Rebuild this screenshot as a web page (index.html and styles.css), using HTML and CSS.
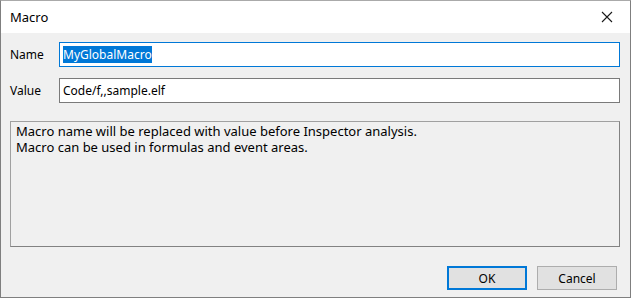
FILE: index.html
```html
<!DOCTYPE html>
<html>
<head>
<meta charset="utf-8">
<link rel="stylesheet" href="styles.css">
</head>
<body>
<div class="window">
  <div class="titlebar">
    <span class="title">Macro</span>
    <span class="close">
      <svg width="12" height="12" viewBox="0 0 12 12"><path d="M1 1 L11 11 M11 1 L1 11" stroke="#1a1a1a" stroke-width="1.1" fill="none"/></svg>
    </span>
  </div>
  <div class="content">
    <div class="fields">
      <label class="label">Name</label>
      <div class="input focused"><span class="sel">MyGlobalMacro</span></div>
      <label class="label">Value</label>
      <div class="input">Code/f,,sample.elf</div>
    </div>
    <div class="info">
      <div class="line">Macro name will be replaced with value before Inspector analysis.</div>
      <div class="line">Macro can be used in formulas and event areas.</div>
    </div>
    <div class="buttons">
      <div class="btn default">OK</div>
      <div class="btn">Cancel</div>
    </div>
  </div>
</div>
</body>
</html>
```
FILE: styles.css
```css
html, body {
  margin: 0;
  padding: 0;
}
body {
  font-family: "Noto Sans", "Liberation Sans", sans-serif;
  font-size: 12px;
  color: #000;
  background: #fff;
}
.window {
  width: 631px;
  height: 298px;
  box-sizing: border-box;
  border: 1px solid #7f7f7f;
  border-top-color: #aaaaaa;
  display: flex;
  flex-direction: column;
  background: #f0f0f0;
}
.titlebar {
  height: 32px;
  flex: none;
  background: #fff;
  display: flex;
  align-items: center;
  justify-content: space-between;
  padding: 0 17px 0 9px;
}
.title {
  font-size: 13px;
  color: #000;
}
.close {
  display: flex;
  width: 12px;
  height: 12px;
}
.content {
  flex: 1;
  display: flex;
  flex-direction: column;
  padding: 9px 10px 0 9px;
}
.fields {
  display: grid;
  grid-template-columns: 49px 1fr;
  row-gap: 11px;
  align-items: center;
}
.input {
  height: 25px;
  box-sizing: border-box;
  border: 1px solid #7a7a7a;
  background: #fff;
  display: flex;
  align-items: center;
  padding-left: 3px;
}
.input.focused {
  border-color: #0078d7;
}
.sel {
  background: #0078d7;
  color: #fff;
  line-height: 17px;
}
.info {
  margin-top: 18px;
  height: 126px;
  box-sizing: border-box;
  border: 1px solid #a0a0a0;
  border-right-color: #828282;
  border-bottom-color: #828282;
  padding: 1px 5px;
  font-size: 13px;
}
.line {
  height: 16px;
  line-height: 16px;
  white-space: nowrap;
}
.buttons {
  margin-top: 19px;
  display: flex;
  justify-content: flex-end;
  gap: 10px;
  padding-right: 3px;
}
.btn {
  width: 80px;
  height: 24px;
  box-sizing: border-box;
  background: #e1e1e1;
  border: 1px solid #adadad;
  display: flex;
  align-items: center;
  justify-content: center;
}
.btn.default {
  border: 2px solid #0078d7;
}
```
